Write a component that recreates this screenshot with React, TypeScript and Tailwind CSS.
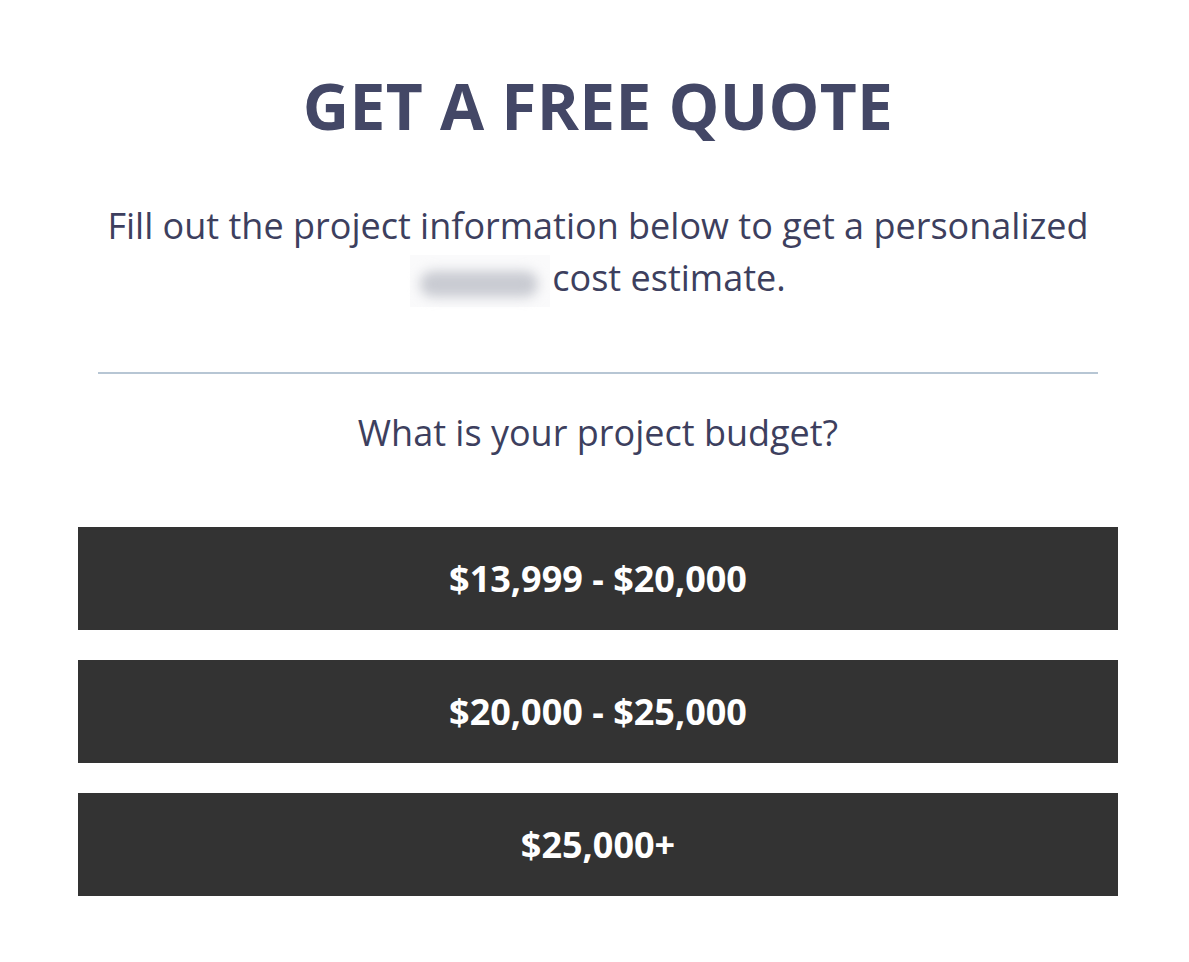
const options = ['$13,999 - $20,000', '$20,000 - $25,000', '$25,000+'];

const App = () => {
    return (
        <div
            className="min-h-screen bg-white flex justify-center pl-[7px]"
            style={{ fontFamily: '"Open Sans", "Noto Sans", sans-serif' }}
        >
            <div className="w-[1040px] pt-[66px] flex flex-col items-center">
                <h1 className="text-[64px] leading-[80px] font-bold text-[#434766] tracking-[0.3px]">
                    GET A FREE QUOTE
                </h1>

                <p className="mt-[54px] text-[36px] leading-[52px] text-[#3d3f5e] text-center">
                    Fill out the project information below to get a personalized
                    <br />
                    <span className="inline-block align-middle w-[140px] h-[52px] mr-[2px] relative bg-[#fafafb]">
                        <span className="absolute left-[10px] right-[12px] top-[16px] bottom-[10px] rounded-full bg-[#c9cbd2] blur-[6px]"></span>
                    </span>
                    cost estimate.
                </p>

                <div className="mt-[65px] w-[1000px] h-[2px] bg-[#b7c6d4]"></div>

                <p className="mt-[33px] text-[36px] leading-[52px] text-[#3d3f5e]">
                    What is your project budget?
                </p>

                <div className="mt-[68px] w-full flex flex-col gap-[30px]">
                    {options.map((opt) => (
                        <button
                            key={opt}
                            className="w-full h-[103px] bg-[#333333] text-white text-[36px] font-bold"
                        >
                            {opt}
                        </button>
                    ))}
                </div>
            </div>
        </div>
    );
};

export default App;
